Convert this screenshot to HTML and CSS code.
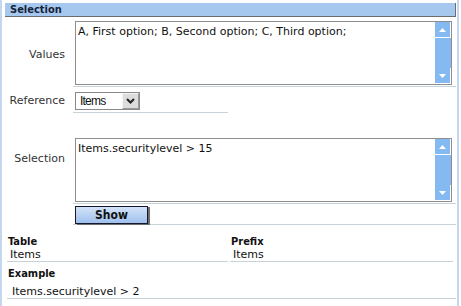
FILE: index.html
```html
<!DOCTYPE html>
<html lang="en">

<head>
    <meta charset="UTF-8" />
    <title>Selection</title>
    <link rel="stylesheet" href="styles.css">
</head>

<body>
    <div class="panel">
        <div class="panel-head">Selection</div>

        <div class="form">
            <div class="row">
                <div class="lbl">Values</div>
                <div class="field">
                    <div class="textbox">
                        <div class="textbox-text">A, First option; B, Second option; C, Third option;</div>
                        <div class="scroll">
                            <div class="scroll-btn">
                                <svg width="7" height="4" viewBox="0 0 7 4"><polygon points="3.5,0 7,4 0,4" fill="#fff" /></svg>
                            </div>
                            <div class="scroll-btn">
                                <svg width="7" height="4" viewBox="0 0 7 4"><polygon points="0,0 7,0 3.5,4" fill="#fff" /></svg>
                            </div>
                        </div>
                    </div>
                </div>
            </div>

            <div class="row row-short">
                <div class="lbl">Reference</div>
                <div class="field field-select">
                    <div class="select">
                        <div class="select-text">Items</div>
                        <div class="select-btn">
                            <svg width="9" height="6" viewBox="0 0 9 6"><polyline points="1,1 4.5,4.5 8,1" fill="none" stroke="#222" stroke-width="2" /></svg>
                        </div>
                    </div>
                </div>
            </div>

            <div class="row">
                <div class="lbl">Selection</div>
                <div class="field field-gap">
                    <div class="textbox">
                        <div class="textbox-text">Items.securitylevel &gt; 15</div>
                        <div class="scroll">
                            <div class="scroll-btn">
                                <svg width="7" height="4" viewBox="0 0 7 4"><polygon points="3.5,0 7,4 0,4" fill="#fff" /></svg>
                            </div>
                            <div class="scroll-btn">
                                <svg width="7" height="4" viewBox="0 0 7 4"><polygon points="0,0 7,0 3.5,4" fill="#fff" /></svg>
                            </div>
                        </div>
                    </div>
                </div>
            </div>

            <div class="row">
                <div class="lbl"></div>
                <div class="field field-btn">
                    <button class="btn">Show</button>
                </div>
            </div>
        </div>

        <div class="info">
            <div class="info-cell">
                <div class="info-title">Table</div>
                <div class="info-value">Items</div>
            </div>
            <div class="info-cell">
                <div class="info-title">Prefix</div>
                <div class="info-value">Items</div>
            </div>
            <div class="info-cell info-wide">
                <div class="info-title">Example</div>
                <div class="info-value">Items.securitylevel &gt; 2</div>
            </div>
        </div>
    </div>
</body>

</html>
```

FILE: styles.css
```css
* {
    box-sizing: border-box;
}

body {
    margin: 0;
    font-family: "DejaVu Sans", sans-serif;
    font-size: 11px;
    color: #222;
    background: #fff;
}

.panel {
    width: 459px;
    min-height: 306px;
    border-left: 2px solid #c4d7ef;
    border-right: 2px solid #c4d7ef;
    padding: 3px 1px 0 3px;
}

.panel-head {
    height: 14px;
    line-height: 13px;
    padding-left: 5px;
    background: #a7c8ee;
    border-right: 1px solid #6c6c6c;
    border-bottom: 1px solid #6c6c6c;
    font-family: "DejaVu Sans Condensed", "DejaVu Sans", sans-serif;
    font-weight: bold;
    color: #15233a;
}

.form {
    margin-top: 4px;
}

.row {
    display: grid;
    grid-template-columns: 68px 1fr;
}

.row-short {
    grid-template-columns: 68px 155px;
}

.lbl {
    align-self: center;
    text-align: right;
    padding-right: 8px;
    color: #333;
}

.field {
    padding: 0 4px 1px 2px;
    border-bottom: 1px solid #c6d3d8;
}

.field-select {
    padding-top: 5px;
    padding-bottom: 2px;
}

.field-gap {
    padding-top: 25px;
}

.field-btn {
    padding-top: 2px;
    padding-bottom: 0;
}

/* fake textarea with the blue scrollbar */
.textbox {
    display: flex;
    height: 64px;
    border: 1px solid #8e8e8e;
    background: #fff;
}

.textbox-text {
    flex: 1;
    padding: 3px 2px;
    line-height: 13px;
    color: #111;
}

.scroll {
    width: 16px;
    background: #84b9f2;
    display: flex;
    flex-direction: column;
    justify-content: space-between;
}

.scroll-btn {
    height: 16px;
    display: flex;
    align-items: center;
    justify-content: center;
    border-right: 1px solid #fff;
    border-bottom: 1px solid #fff;
}

.select {
    display: flex;
    width: 65px;
    height: 18px;
    border: 1px solid #8a8a8a;
    background: #fff;
}

.select-text {
    flex: 1;
    padding-left: 4px;
    font-family: "Liberation Sans", Arial, sans-serif;
    font-size: 12px;
    letter-spacing: -0.8px;
    line-height: 16px;
    color: #111;
}

.select-btn {
    width: 17px;
    display: flex;
    align-items: center;
    justify-content: center;
    background: #dcdcdc;
    border: 1px solid #f4f4f4;
    border-right-color: #999;
    border-bottom-color: #999;
}

.btn {
    display: block;
    width: 73px;
    height: 18px;
    padding: 0;
    border: 1px solid #14182a;
    background: linear-gradient(#d3e3f8, #9fc1ee);
    box-shadow: 2px 1px 0 #6e6e6e;
    font-family: "DejaVu Sans Condensed", "DejaVu Sans", sans-serif;
    font-size: 12px;
    font-weight: bold;
    color: #111;
    line-height: 15px;
}

.info {
    display: grid;
    grid-template-columns: 221px 223px;
    column-gap: 2px;
    padding-left: 2px;
}

.info-cell {
    padding-top: 10px;
    border-bottom: 1px solid #c6d3d8;
}

.info-wide {
    grid-column: 1 / 3;
    width: 449px;
    padding-top: 5px;
}

.info-title {
    font-family: "DejaVu Sans Condensed", "DejaVu Sans", sans-serif;
    font-weight: bold;
    line-height: 13px;
    padding-left: 1px;
    color: #111;
}

.info-value {
    line-height: 13px;
    padding-left: 3px;
    color: #111;
}

.info-wide .info-title {
    margin-bottom: 5px;
}

.info-wide .info-value {
    padding-left: 5px;
}
```
